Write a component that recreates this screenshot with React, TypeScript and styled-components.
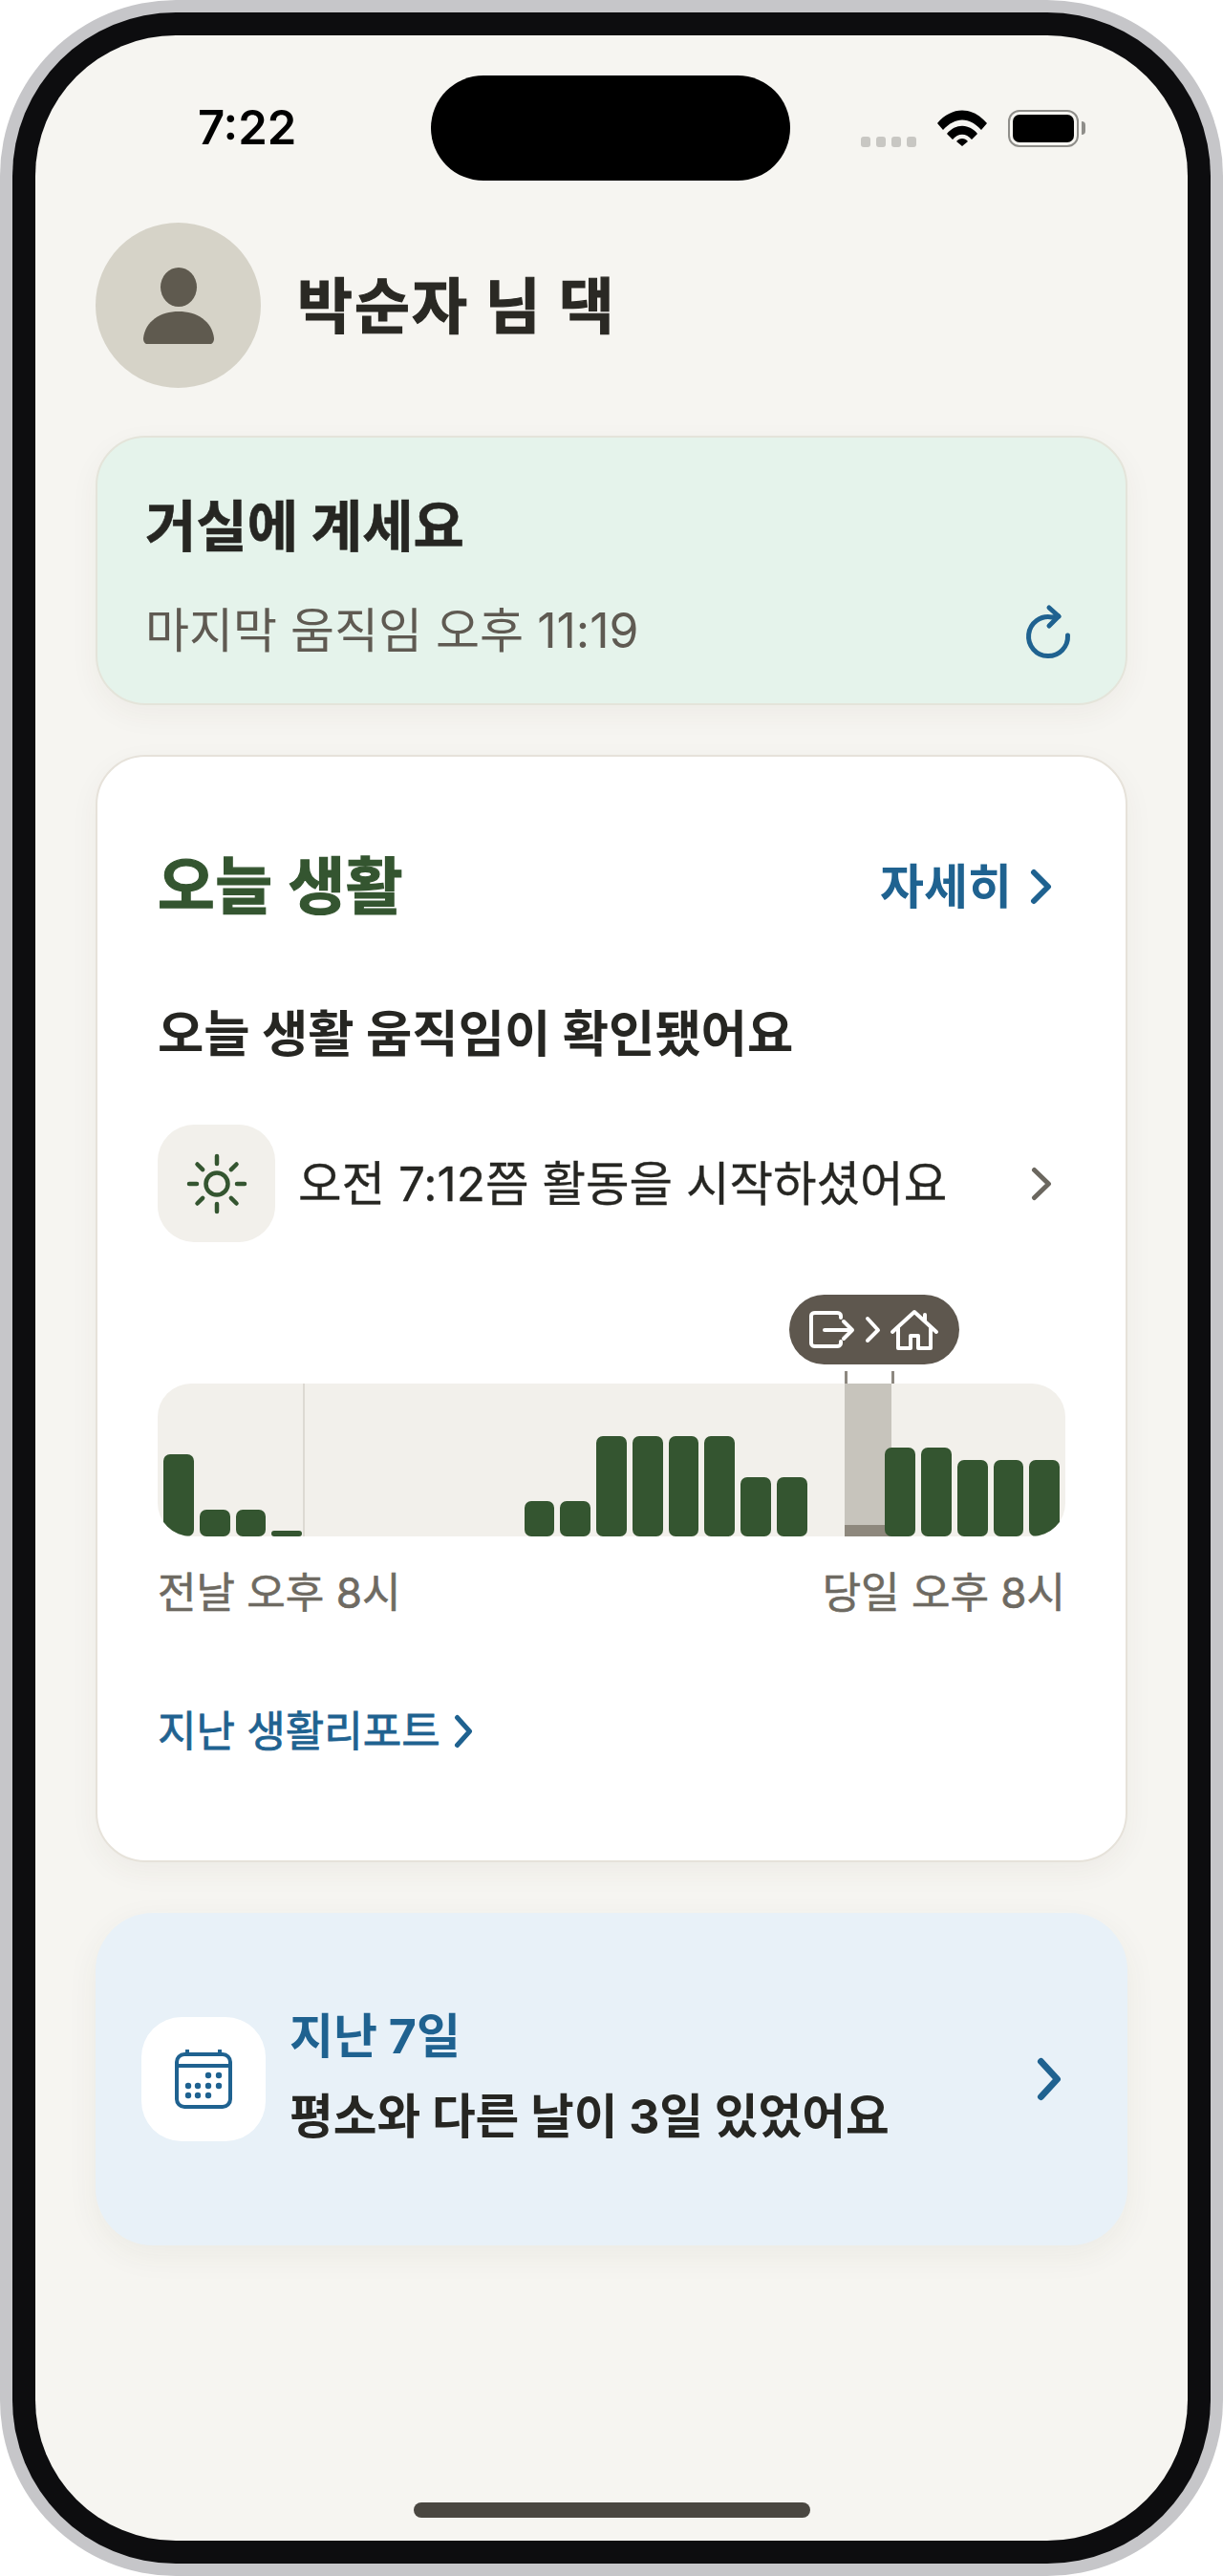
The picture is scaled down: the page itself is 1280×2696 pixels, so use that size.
import React from "react";
import styled, { createGlobalStyle } from "styled-components";

const Ink = "#262622";
const Green = "#345530";
const Blue = "#1f6290";
const Muted = "#6e6a62";

const GlobalStyle = createGlobalStyle`
  html, body {
    margin: 0;
    padding: 0;
    background: #ffffff;
  }
  body {
    font-family: Inter, "Noto Sans CJK KR", sans-serif;
  }
  * {
    box-sizing: border-box;
  }
`;

const Frame = styled.div`
  width: 1280px;
  height: 2696px;
  padding: 13px;
  background: #c6c6c9;
  border-radius: 184px;
`;

const Bezel = styled.div`
  height: 100%;
  padding: 24px;
  background: #0d0d0f;
  border-radius: 171px;
`;

const Screen = styled.div`
  height: 100%;
  display: flex;
  flex-direction: column;
  background: #f6f5f1;
  border-radius: 147px;
  overflow: hidden;
`;

const StatusBar = styled.div`
  display: grid;
  grid-template-columns: 414px 376px 1fr;
  align-items: center;
  height: 110px;
  margin-top: 42px;
`;

const Time = styled.div`
  padding-left: 170px;
  font-size: 49px;
  font-weight: 600;
  line-height: 56px;
  color: #000000;
`;

const Island = styled.div`
  height: 110px;
  background: #000000;
  border-radius: 55px;
`;

const StatusIcons = styled.div`
  display: flex;
  align-items: center;
  padding-left: 74px;
`;

const SignalDots = styled.div`
  display: flex;
  gap: 6px;
  margin-top: 28px;
`;

const SignalDot = styled.span`
  width: 10px;
  height: 11px;
  background: #c8c7c3;
  border-radius: 3px;
`;

const WifiIcon = styled.svg`
  width: 52px;
  height: 38px;
  margin-left: 22px;
  margin-right: 22px;
`;

const Battery = styled.div`
  position: relative;
  width: 74px;
  height: 39px;
  padding: 3px;
  border: 2px solid #8f8e8a;
  border-radius: 12px;
  &::after {
    content: "";
    position: absolute;
    top: 10px;
    right: -9px;
    width: 4px;
    height: 14px;
    background: #8f8e8a;
    border-radius: 0 4px 4px 0;
  }
`;

const BatteryFill = styled.div`
  height: 100%;
  background: #000000;
  border-radius: 7px;
`;

const Content = styled.div`
  display: flex;
  flex-direction: column;
  padding: 0 63px;
`;

const Header = styled.div`
  display: flex;
  align-items: center;
  gap: 38px;
  margin-top: 44px;
`;

const Avatar = styled.div`
  width: 173px;
  height: 173px;
  display: flex;
  align-items: center;
  justify-content: center;
  background: #d6d3c8;
  border-radius: 50%;
`;

const Name = styled.h1`
  margin: 0;
  font-size: 63px;
  font-weight: 700;
  line-height: 72px;
  letter-spacing: 2px;
  color: #2a2924;
  -webkit-text-stroke: 1.2px #2a2924;
`;

const PresenceCard = styled.section`
  margin-top: 50px;
  padding: 58px 51px 46px 50px;
  background: #e5f3eb;
  border: 2px solid #e4e4da;
  border-radius: 52px;
  box-shadow: 0 10px 30px rgba(70, 60, 40, 0.05);
`;

const PresenceTitle = styled.div`
  font-size: 58px;
  font-weight: 700;
  line-height: 70px;
  color: ${Ink};
  -webkit-text-stroke: 0.6px ${Ink};
`;

const PresenceRow = styled.div`
  display: flex;
  align-items: center;
  justify-content: space-between;
  margin-top: 44px;
  height: 60px;
`;

const PresenceText = styled.div`
  font-size: 50px;
  font-weight: 400;
  line-height: 60px;
  color: #5f5a52;
`;

const LifeCard = styled.section`
  margin-top: 52px;
  padding: 101px 63px 105px 63px;
  background: #ffffff;
  border: 2px solid #e6e2da;
  border-radius: 52px;
  box-shadow: 0 10px 30px rgba(70, 60, 40, 0.05);
`;

const LifeHead = styled.div`
  display: flex;
  align-items: center;
  justify-content: space-between;
`;

const LifeTitle = styled.h2`
  margin: 0;
  font-size: 65px;
  font-weight: 700;
  line-height: 70px;
  letter-spacing: 0.5px;
  color: ${Green};
  -webkit-text-stroke: 1.2px ${Green};
`;

const DetailLink = styled.div`
  display: flex;
  align-items: center;
  gap: 19px;
  padding-right: 14px;
  font-size: 50px;
  font-weight: 700;
  line-height: 70px;
  color: ${Blue};
`;

const LifeSummary = styled.div`
  margin-top: 87px;
  font-size: 52.5px;
  font-weight: 700;
  line-height: 64px;
  color: ${Ink};
`;

const ActivityRow = styled.div`
  display: flex;
  align-items: center;
  margin-top: 63px;
  padding-right: 14px;
`;

const SunTile = styled.div`
  width: 123px;
  height: 123px;
  display: flex;
  align-items: center;
  justify-content: center;
  flex-shrink: 0;
  background: #f2f0eb;
  border-radius: 38px;
`;

const ActivityText = styled.div`
  flex: 1;
  margin-left: 24px;
  font-size: 49.5px;
  font-weight: 400;
  line-height: 60px;
  color: ${Ink};
  -webkit-text-stroke: 0.3px ${Ink};
`;

const ChartArea = styled.div`
  position: relative;
  margin-top: 148px;
`;

const Chart = styled.div`
  position: relative;
  height: 160px;
  display: flex;
  align-items: flex-end;
  gap: 6px;
  padding: 0 6px;
  background: #f2f0eb;
  border-radius: 35px;
  overflow: hidden;
`;

const Bar = styled.div<{ $h: number }>`
  position: relative;
  z-index: 2;
  flex: 1;
  height: ${(p) => p.$h}px;
  background: ${Green};
  border-radius: 7px;
`;

const MidnightLine = styled.div`
  position: absolute;
  top: 0;
  bottom: 0;
  left: 152px;
  width: 2px;
  background: #dcd9d2;
`;

const AwayZone = styled.div`
  position: absolute;
  top: 0;
  bottom: 0;
  left: 719px;
  width: 49px;
  background: #c7c4bc;
`;

const AwayBase = styled.div`
  position: absolute;
  left: 0;
  right: 0;
  bottom: 0;
  height: 12px;
  background: #8e887d;
`;

const ZoneTick = styled.div<{ $left: number }>`
  position: absolute;
  top: -13px;
  left: ${(p) => p.$left}px;
  width: 3px;
  height: 13px;
  background: #8d8880;
`;

const Tooltip = styled.div`
  position: absolute;
  top: -93px;
  left: 661px;
  width: 178px;
  height: 73px;
  display: flex;
  align-items: center;
  justify-content: center;
  background: #5e574e;
  border-radius: 37px;
`;

const ChartLabels = styled.div`
  display: flex;
  justify-content: space-between;
  margin-top: 29px;
  font-size: 44px;
  font-weight: 400;
  line-height: 60px;
  color: ${Muted};
  -webkit-text-stroke: 0.6px ${Muted};
`;

const ReportLink = styled.div`
  display: flex;
  align-items: center;
  gap: 14px;
  margin-top: 85px;
  font-size: 44px;
  font-weight: 400;
  line-height: 60px;
  color: ${Blue};
  -webkit-text-stroke: 0.8px ${Blue};
`;

const WeekCard = styled.section`
  display: flex;
  align-items: center;
  height: 348px;
  margin-top: 53px;
  padding: 0 69px 0 48px;
  background: #e8f1f8;
  border-radius: 60px;
  box-shadow: 0 10px 34px rgba(70, 60, 40, 0.06);
`;

const CalendarTile = styled.div`
  width: 130px;
  height: 130px;
  display: flex;
  align-items: center;
  justify-content: center;
  flex-shrink: 0;
  background: #ffffff;
  border-radius: 42px;
`;

const WeekText = styled.div`
  flex: 1;
  display: flex;
  flex-direction: column;
  gap: 24px;
  margin-left: 25px;
  padding-bottom: 6px;
`;

const WeekTitle = styled.div`
  font-size: 50px;
  font-weight: 700;
  line-height: 60px;
  color: ${Blue};
`;

const WeekLine = styled.div`
  font-size: 49.7px;
  font-weight: 700;
  line-height: 60px;
  color: ${Ink};
`;

const HomeIndicator = styled.div`
  align-self: center;
  width: 415px;
  height: 16px;
  margin-top: auto;
  margin-bottom: 24px;
  background: #4a4741;
  border-radius: 8px;
`;

const barHeights = [86, 28, 28, 6, 0, 0, 0, 0, 0, 0, 37, 37, 105, 105, 105, 105, 62, 62, 0, 0, 93, 93, 80, 80, 80];

function Chevron({ width, height, color, stroke }: { width: number; height: number; color: string; stroke: number }) {
  return (
    <svg width={width} height={height} viewBox={`0 0 ${width} ${height}`} fill="none">
      <path
        d={`M${stroke / 2 + 1} ${stroke / 2 + 1} L${width - stroke / 2 - 1} ${height / 2} L${stroke / 2 + 1} ${height - stroke / 2 - 1}`}
        stroke={color}
        strokeWidth={stroke}
        strokeLinecap="round"
        strokeLinejoin="round"
      />
    </svg>
  );
}

function SunIcon() {
  const rays = [0, 45, 90, 135, 180, 225, 270, 315];
  return (
    <svg width="64" height="64" viewBox="0 0 64 64" fill="none" stroke={Green} strokeWidth="4.5" strokeLinecap="round">
      <circle cx="32" cy="32" r="11.5" />
      {rays.map((deg) => (
        <line key={deg} x1="32" y1="11" x2="32" y2="3" transform={`rotate(${deg} 32 32)`} />
      ))}
    </svg>
  );
}

function CalendarIcon() {
  const dots = [
    [35, 27], [46, 27],
    [14, 38], [24, 38], [35, 38], [46, 38],
    [14, 48], [24, 48], [35, 48],
  ];
  return (
    <svg width="60" height="62" viewBox="0 0 60 62" fill="none" stroke={Blue} strokeWidth="4">
      <rect x="2" y="5" width="56" height="55" rx="8" />
      <path d="M2 17 H58" />
      <path d="M13 1 V5 M47 1 V5" strokeLinecap="round" />
      {dots.map(([x, y]) => (
        <circle key={`${x}-${y}`} cx={x} cy={y} r="3.2" fill={Blue} stroke="none" />
      ))}
    </svg>
  );
}

function App() {
  return (
    <Frame>
      <GlobalStyle />
      <Bezel>
        <Screen>
          <StatusBar>
            <Time>7:22</Time>
            <Island />
            <StatusIcons>
              <SignalDots>
                <SignalDot />
                <SignalDot />
                <SignalDot />
                <SignalDot />
              </SignalDots>
              <WifiIcon viewBox="0 0 52 38">
                <path d="M0 14 C15 -4 37 -4 52 14 L46 21 C33 7 19 7 6 21 Z" fill="#000" />
                <path d="M10 25 C19 14 33 14 42 25 L36 31 C30 24 22 24 16 31 Z" fill="#000" />
                <path d="M20 33 C23 29 29 29 32 33 L26 38 Z" fill="#000" />
              </WifiIcon>
              <Battery>
                <BatteryFill />
              </Battery>
            </StatusIcons>
          </StatusBar>

          <Content>
            <Header>
              <Avatar>
                <svg width="74" height="80" viewBox="0 0 74 80" fill="#5f5a4f">
                  <ellipse cx="37" cy="20.5" rx="19" ry="20.5" />
                  <path d="M0 74 C2 56 18 46 37 46 C56 46 72 56 74 74 C74 78 72 80 70 80 H4 C2 80 0 78 0 74 Z" />
                </svg>
              </Avatar>
              <Name>박순자 님 댁</Name>
            </Header>

            <PresenceCard>
              <PresenceTitle>거실에 계세요</PresenceTitle>
              <PresenceRow>
                <PresenceText>마지막 움직임 오후 11:19</PresenceText>
                <svg width="60" height="60" viewBox="0 0 60 60" fill="none" stroke={Blue} strokeWidth="5" strokeLinecap="round" strokeLinejoin="round">
                  <path d="M50.5 35 A20.5 20.5 0 1 1 34 16 L41 15" />
                  <path d="M31 6 L41 15 L31 25" />
                </svg>
              </PresenceRow>
            </PresenceCard>

            <LifeCard>
              <LifeHead>
                <LifeTitle>오늘 생활</LifeTitle>
                <DetailLink>
                  자세히
                  <Chevron width={23} height={38} color={Blue} stroke={6} />
                </DetailLink>
              </LifeHead>
              <LifeSummary>오늘 생활 움직임이 확인됐어요</LifeSummary>

              <ActivityRow>
                <SunTile>
                  <SunIcon />
                </SunTile>
                <ActivityText>오전 7:12쯤 활동을 시작하셨어요</ActivityText>
                <Chevron width={22} height={36} color="#6b675f" stroke={5} />
              </ActivityRow>

              <ChartArea>
                <Tooltip>
                  <svg width="136" height="44" viewBox="0 0 136 44" fill="none" stroke="#fff" strokeWidth="4" strokeLinecap="round" strokeLinejoin="round">
                    <path d="M33 9 V7 C33 5 31 4 29 4 H6 C4 4 2 5 2 7 V36 C2 38 4 39 6 39 H29 C31 39 33 38 33 36 V34" />
                    <path d="M16 22 H45 M36 13 L45 22 L36 31" />
                    <path d="M61 10 L72 22 L61 33" />
                    <path d="M87 24 L110 3 L133 24" />
                    <path d="M93 20 V41 H106 V28 H114 V41 H127 V20" />
                    <path d="M121 6 V12" />
                  </svg>
                </Tooltip>
                <ZoneTick $left={719} />
                <ZoneTick $left={768} />
                <Chart>
                  <MidnightLine />
                  <AwayZone>
                    <AwayBase />
                  </AwayZone>
                  {barHeights.map((h, i) => (
                    <Bar key={i} $h={h} />
                  ))}
                </Chart>
              </ChartArea>

              <ChartLabels>
                <span>전날 오후 8시</span>
                <span>당일 오후 8시</span>
              </ChartLabels>

              <ReportLink>
                지난 생활리포트
                <Chevron width={20} height={36} color={Blue} stroke={5} />
              </ReportLink>
            </LifeCard>

            <WeekCard>
              <CalendarTile>
                <CalendarIcon />
              </CalendarTile>
              <WeekText>
                <WeekTitle>지난 7일</WeekTitle>
                <WeekLine>평소와 다른 날이 3일 있었어요</WeekLine>
              </WeekText>
              <Chevron width={26} height={46} color={Blue} stroke={7} />
            </WeekCard>
          </Content>

          <HomeIndicator />
        </Screen>
      </Bezel>
    </Frame>
  );
}

export default App;
